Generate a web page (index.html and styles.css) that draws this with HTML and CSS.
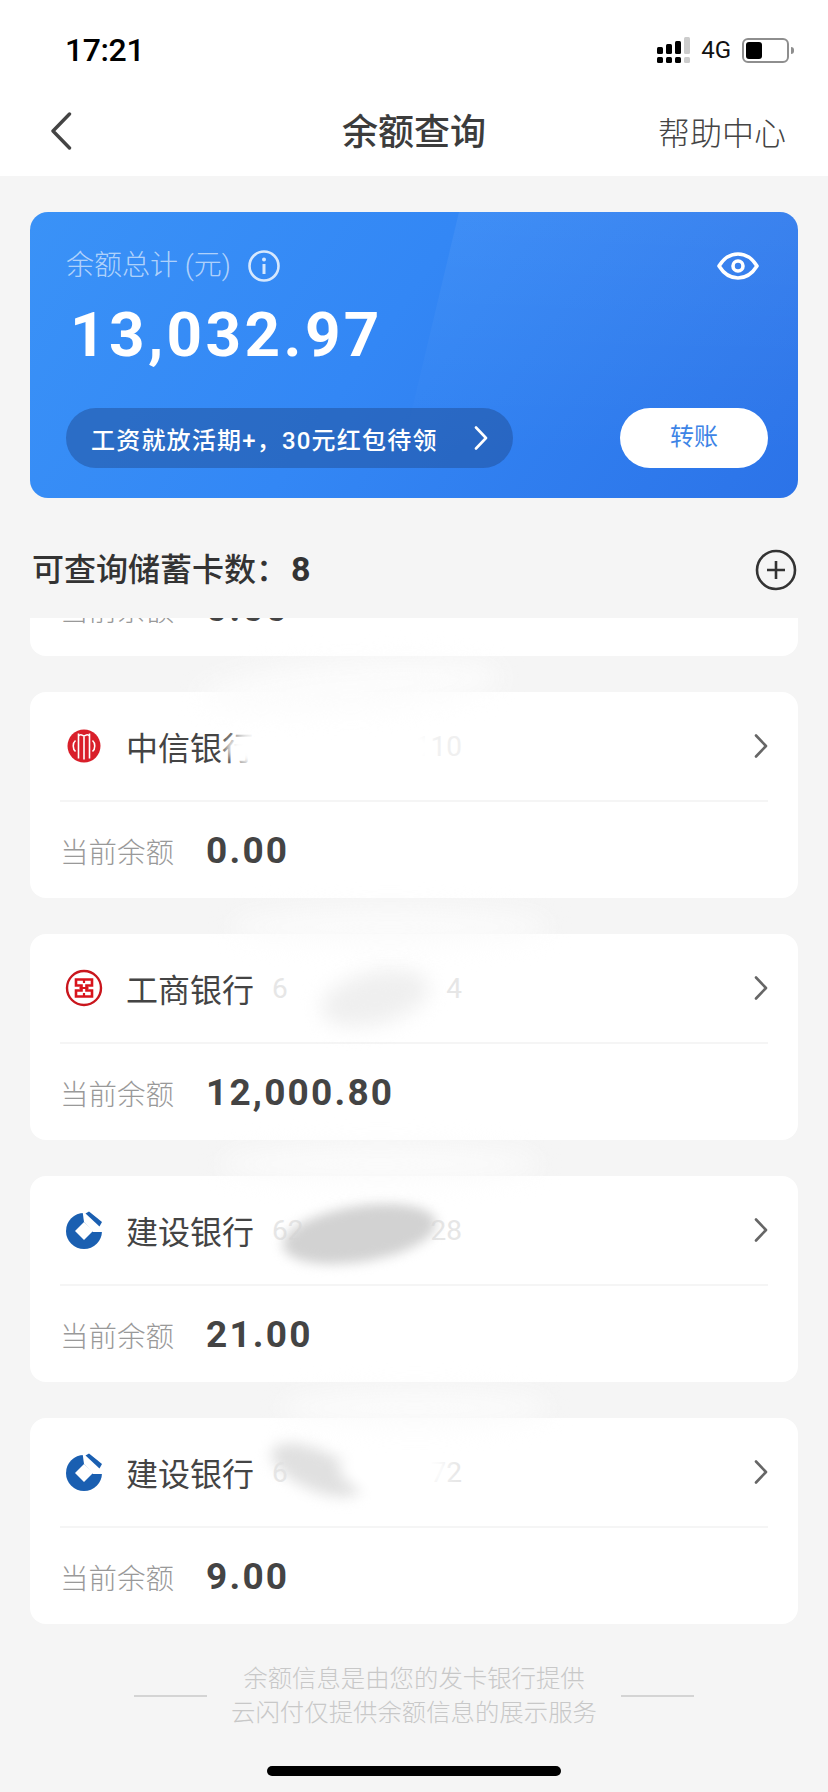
FILE: index.html
```html
<!DOCTYPE html>
<html lang="zh-CN">
<head>
  <meta charset="UTF-8">
  <title>余额查询</title>
  <meta name="viewport" content="width=device-width, initial-scale=1.0">
  <link rel="stylesheet" href="styles.css">
</head>
<body>
  <svg class="defs" width="0" height="0" aria-hidden="true">
    <defs>
      <symbol id="chev" viewBox="0 0 14 24">
        <path d="M2 1.5 12 12 2 22.5" fill="none" stroke="currentColor" stroke-width="2.6" stroke-linecap="round" stroke-linejoin="round"/>
      </symbol>
      <symbol id="logo-citic" viewBox="-1 -1 38 38">
        <circle cx="18" cy="18" r="16.500" fill="#d91f2a"/>
        <path d="M9.500 12.500C6.500 15 6.500 21 9.500 23.500M12.500 5.500V30.500M12.500 8C15 5 16.500 8 18 8S21 5 23.500 8M18 8V31.500M23.500 5.500V30.500M26.500 12.500C29.500 15 29.500 21 26.500 23.500" fill="none" stroke="#fff" stroke-width="1.600"/>
      </symbol>
      <symbol id="logo-icbc" viewBox="0 0 38 38">
        <circle cx="19" cy="19" r="17" fill="none" stroke="#c9161d" stroke-width="2.400"/>
        <path d="M11 10.500H27V16.500H21.500V21.500H27V27.500H11V21.500H16.500V16.500H11Z" fill="none" stroke="#d8141c" stroke-width="2.600"/>
        <path d="M19 10.500V14M19 24V27.500M14.500 19H23.500" stroke="#d8141c" stroke-width="2.200" fill="none"/>
      </symbol>
      <symbol id="logo-ccb" viewBox="-1 0 38 38">
        <circle cx="18" cy="20" r="18" fill="#1a5fb1"/>
        <path d="M18 11 27 20 18 29 9 20Z" fill="#fff"/>
        <path d="M18 11 16.500 0 22 0 38 14V21H27Z" fill="#fff"/>
        <path d="M19.500 2.500 23 .5 36 11 33.500 15.500Z" fill="#1a5fb1"/>
      </symbol>
    </defs>
  </svg>

  <header class="top">
    <div class="status">
      <span class="time">17:21</span>
      <div class="status-right">
        <svg class="signal" width="33" height="26" viewBox="0 0 33 26">
          <g fill="#000">
            <rect x="0" y="10" width="6" height="7" rx="1.500"/>
            <rect x="9" y="7" width="6" height="10" rx="1.500"/>
            <rect x="18" y="4" width="6" height="13" rx="1.500"/>
            <rect x="0" y="20" width="6" height="6" rx="1.500"/>
            <rect x="9" y="20" width="6" height="6" rx="1.500"/>
            <rect x="18" y="20" width="6" height="6" rx="1.500"/>
          </g>
          <g fill="#ccc">
            <rect x="27" y="0" width="6" height="17" rx="1.500"/>
            <rect x="27" y="20" width="6" height="6" rx="1.500"/>
          </g>
        </svg>
        <span class="net">4G</span>
        <div class="battery"><div class="battery-fill"></div></div>
        <div class="battery-cap"></div>
      </div>
    </div>
    <nav class="nav">
      <svg class="back" width="22" height="38" viewBox="0 0 22 38">
        <path d="M19.500 2 3 19 19.500 36" fill="none" stroke="#444" stroke-width="3.400" stroke-linecap="round" stroke-linejoin="round"/>
      </svg>
      <h1 class="nav-title">余额查询</h1>
      <a class="nav-help">帮助中心</a>
    </nav>
  </header>

  <main class="page">
    <section class="total">
      <div class="total-label-row">
        <span class="total-label">余额总计 (元)</span>
        <svg class="info" width="32" height="32" viewBox="0 0 32 32">
          <circle cx="16" cy="16" r="14.500" fill="none" stroke="currentColor" stroke-width="2.600"/>
          <circle cx="16" cy="9.500" r="2" fill="currentColor"/>
          <path d="M16 14V24" stroke="currentColor" stroke-width="3"/>
        </svg>
        <svg class="eye" width="42" height="28" viewBox="0 0 42 28">
          <path d="M2 14C7 6 13.500 2 21 2S35 6 40 14C35 22 28.500 26 21 26S7 22 2 14Z" fill="none" stroke="#fff" stroke-width="3.600" stroke-linejoin="round"/>
          <circle cx="21" cy="14" r="5" fill="none" stroke="#fff" stroke-width="3.600"/>
        </svg>
      </div>
      <div class="total-num">13,032.97</div>
      <div class="total-actions">
        <a class="promo">
          <span>工资就放活期+，30元红包待领</span>
          <svg class="promo-chev" width="14" height="24"><use href="#chev"/></svg>
        </a>
        <a class="transfer">转账</a>
      </div>
    </section>

    <div class="list-head">
      <h2 class="list-title">可查询储蓄卡数：<b>8</b></h2>
      <svg class="add" width="42" height="42" viewBox="0 0 42 42">
        <circle cx="21" cy="21" r="19" fill="none" stroke="#333" stroke-width="2.600"/>
        <path d="M12 21H30M21 12V30" stroke="#333" stroke-width="2.600"/>
      </svg>
    </div>

    <div class="list">
      <article class="card card-scrolled">
        <div class="card-head"></div>
        <div class="card-bal"><span class="bal-label">当前余额</span><span class="bal-num">0.00</span></div>
      </article>

      <article class="card">
        <div class="smudge smudge-a1"></div>
        <div class="card-head">
          <svg class="logo" width="38" height="38"><use href="#logo-citic"/></svg>
          <span class="bank">中信银行</span>
          <span class="card-no card-no-faint"><i></i><i>4110</i></span>
          <svg class="chev" width="14" height="24"><use href="#chev"/></svg>
        </div>
        <div class="smudge smudge-a2"></div>
        <div class="card-bal"><span class="bal-label">当前余额</span><span class="bal-num">0.00</span></div>
      </article>

      <article class="card">
        <div class="smudge smudge-b1"></div>
        <div class="card-head">
          <svg class="logo" width="38" height="38"><use href="#logo-icbc"/></svg>
          <span class="bank">工商银行</span>
          <span class="card-no"><i>6</i><i>4</i></span>
          <svg class="chev" width="14" height="24"><use href="#chev"/></svg>
        </div>
        <div class="smudge smudge-b2"></div>
        <div class="card-bal"><span class="bal-label">当前余额</span><span class="bal-num">12,000.80</span></div>
      </article>

      <article class="card">
        <div class="smudge smudge-c1"></div>
        <div class="card-head">
          <svg class="logo" width="38" height="38"><use href="#logo-ccb"/></svg>
          <span class="bank">建设银行</span>
          <span class="card-no"><i>62</i><i>28</i></span>
          <svg class="chev" width="14" height="24"><use href="#chev"/></svg>
        </div>
        <div class="smudge smudge-c2"></div>
        <div class="card-bal"><span class="bal-label">当前余额</span><span class="bal-num">21.00</span></div>
      </article>

      <article class="card">
        <div class="smudge smudge-d1"></div>
        <div class="smudge smudge-d3"></div>
        <div class="card-head">
          <svg class="logo" width="38" height="38"><use href="#logo-ccb"/></svg>
          <span class="bank">建设银行</span>
          <span class="card-no"><i>6</i><i>72</i></span>
          <svg class="chev" width="14" height="24"><use href="#chev"/></svg>
        </div>
        <div class="smudge smudge-d2"></div>
        <div class="card-bal"><span class="bal-label">当前余额</span><span class="bal-num">9.00</span></div>
      </article>
    </div>

    <footer class="note">
      <span class="note-line"></span>
      <p class="note-text">余额信息是由您的发卡银行提供<br>云闪付仅提供余额信息的展示服务</p>
      <span class="note-line"></span>
    </footer>
  </main>

  <div class="home-bar"></div>
</body>
</html>
```

FILE: styles.css
```css
html, body {
  margin: 0;
  padding: 0;
}
body {
  width: 828px;
  height: 1792px;
  overflow: hidden;
  position: relative;
  background: #f5f5f5;
  color: #444;
  font-family: Roboto, 'Noto Sans CJK SC', sans-serif;
}
.defs {
  position: absolute;
}
h1, h2, p {
  margin: 0;
  font-weight: 400;
}

/* status bar + nav */
.top {
  background: #fff;
  height: 176px;
}
.status {
  height: 88px;
  box-sizing: border-box;
  padding: 34px 34px 0 65px;
  display: flex;
  justify-content: space-between;
  align-items: flex-start;
}
.time {
  font-size: 32px;
  line-height: 32px;
  font-weight: 500;
  color: #000;
  letter-spacing: -0.4px;
}
.status-right {
  display: flex;
  align-items: center;
  margin-top: 3px;
}
.net {
  font-size: 24px;
  line-height: 26px;
  color: #111;
  margin-left: 11px;
  margin-right: 11px;
}
.battery {
  width: 47px;
  height: 25px;
  box-sizing: border-box;
  border: 2px solid #8e8e8e;
  border-radius: 6px;
  padding: 2px;
}
.battery-fill {
  width: 16px;
  height: 100%;
  background: #000;
  border-radius: 3px;
}
.battery-cap {
  width: 3px;
  height: 7px;
  margin-left: 2px;
  background: #8e8e8e;
  border-radius: 0 3px 3px 0;
}
.nav {
  height: 88px;
  box-sizing: border-box;
  padding: 0 42px 0 50px;
  display: flex;
  align-items: center;
  justify-content: space-between;
  position: relative;
}
.back {
  margin-top: -2px;
}
.nav-title {
  font-size: 36px;
  font-weight: 500;
  color: #3c3c3c;
  line-height: 88px;
  margin-left: 98px;
  margin-top: 2px;
}
.nav-help {
  font-size: 32px;
  font-weight: 300;
  color: #444;
  line-height: 88px;
  margin-top: 4px;
}

.page {
  padding: 36px 30px 0;
}

/* blue total card */
.total {
  height: 286px;
  box-sizing: border-box;
  padding: 36px 26px 30px 36px;
  border-radius: 18px;
  background: linear-gradient(125deg, #3a92f7 0%, #3387f5 45%, #2c73e8 100%);
  position: relative;
  overflow: hidden;
  color: #fff;
  display: flex;
  flex-direction: column;
}
.total::before {
  content: '';
  position: absolute;
  inset: 0;
  background: linear-gradient(180deg, rgba(255,255,255,.06), rgba(255,255,255,0) 85%);
  clip-path: polygon(429px 0, 100% 0, 100% 100%, 361px 100%);
}
.total > * {
  position: relative;
}
.total-label-row {
  display: flex;
  align-items: center;
  height: 36px;
}
.total-label {
  font-size: 28px;
  font-weight: 300;
  color: rgba(255,255,255,.62);
  line-height: 36px;
}
.info {
  margin-left: 17px;
  color: rgba(255,255,255,.8);
}
.eye {
  margin-left: auto;
  margin-right: 13px;
}
.total-num {
  font-size: 62px;
  font-weight: 700;
  line-height: 72px;
  letter-spacing: 3.4px;
  margin: 15px 0 0 4px;
}
.total-actions {
  display: flex;
  gap: 107px;
  margin-top: auto;
}
.promo {
  width: 447px;
  height: 60px;
  box-sizing: border-box;
  padding: 0 25px;
  border-radius: 30px;
  background: rgba(32, 78, 150, .5);
  font-size: 24px;
  font-weight: 500;
  letter-spacing: 1.2px;
  display: flex;
  align-items: center;
  justify-content: space-between;
}
.promo-chev {
  color: #fff;
}
.transfer {
  width: 148px;
  height: 60px;
  border-radius: 30px;
  background: #fff;
  color: #3d84e6;
  font-size: 24px;
  line-height: 58px;
  text-align: center;
}

/* list */
.list-head {
  height: 120px;
  box-sizing: border-box;
  padding: 50px 1px 0 2px;
  display: flex;
  justify-content: space-between;
  align-items: flex-start;
}
.list-title {
  font-size: 32px;
  font-weight: 500;
  line-height: 44px;
  color: #333;
  margin-top: -1px;
}
.list-title b {
  font-size: 34px;
  font-weight: 700;
  margin-left: 3px;
}
.add {
  margin-top: 1px;
}
.list {
  height: 1006px;
  overflow: hidden;
  display: flex;
  flex-direction: column;
  gap: 36px;
}
.card {
  flex: none;
  height: 206px;
  box-sizing: border-box;
  padding: 0 30px;
  background: #fff;
  border-radius: 16px;
  position: relative;
}
.card-scrolled {
  margin-top: -168px;
}
.card-head {
  height: 110px;
  box-sizing: border-box;
  border-bottom: 2px solid #f5f5f5;
  display: flex;
  align-items: center;
  position: relative;
}
.logo {
  flex: none;
  margin-left: 5px;
}
.bank {
  font-size: 32px;
  margin-left: 23px;
  color: #444;
  position: relative;
}
.card-no {
  margin-left: 18px;
  width: 190px;
  display: flex;
  justify-content: space-between;
  font-size: 28px;
  color: #e6e6e6;
  position: relative;
}
.card-no-faint {
  color: #f0f0f0;
}
.card-no i {
  font-style: normal;
}
.chev {
  margin-left: auto;
  color: #666;
}
.card-bal {
  height: 96px;
  display: flex;
  align-items: center;
  position: relative;
}
.bal-label {
  font-size: 28.5px;
  color: #999;
  font-weight: 300;
}
.bal-num {
  font-size: 37px;
  font-weight: 700;
  letter-spacing: 2.2px;
  margin-left: 32px;
  color: #444;
}

/* the hand painted masks over the card numbers */
.smudge {
  position: absolute;
  border-radius: 50%;
  z-index: 2;
}
.smudge-a1 {
  left: 195px;
  top: 26px;
  width: 210px;
  height: 60px;
  background: #fff;
  filter: blur(5px);
}
.smudge-a2 {
  left: 170px;
  top: -30px;
  width: 300px;
  height: 50px;
  background: #fcfcfc;
  filter: blur(12px);
  transform: rotate(-4deg);
}
.smudge-b1 {
  left: 290px;
  top: 38px;
  width: 110px;
  height: 52px;
  background: #efefef;
  filter: blur(10px);
  transform: rotate(-14deg);
}
.smudge-b2 {
  left: 200px;
  top: -25px;
  width: 320px;
  height: 36px;
  background: #fbfbfb;
  filter: blur(12px);
}
.smudge-c1 {
  left: 252px;
  top: 30px;
  width: 155px;
  height: 56px;
  background: #d2d2d2;
  filter: blur(6px);
  transform: rotate(-9deg);
}
.smudge-c2 {
  left: 190px;
  top: -30px;
  width: 320px;
  height: 36px;
  background: #fbfbfb;
  filter: blur(12px);
}
.smudge-d1 {
  left: 238px;
  top: 32px;
  width: 96px;
  height: 40px;
  background: #e0e0e0;
  filter: blur(7px);
  transform: rotate(24deg);
}
.smudge-d2 {
  left: 250px;
  top: -28px;
  width: 270px;
  height: 36px;
  background: #fbfbfb;
  filter: blur(12px);
}
.smudge-d3 {
  left: 310px;
  top: 26px;
  width: 110px;
  height: 50px;
  background: #fff;
  filter: blur(8px);
}

/* footer note */
.note {
  margin-top: 38px;
  display: flex;
  align-items: center;
  justify-content: center;
  gap: 23px;
}
.note-line {
  width: 73px;
  height: 2px;
  background: #d4d4d4;
}
.note-text {
  font-size: 24.4px;
  line-height: 34px;
  font-weight: 300;
  color: #c8c8c8;
  text-align: center;
  width: 368px;
}

.home-bar {
  position: absolute;
  left: 267px;
  top: 1766px;
  width: 294px;
  height: 10px;
  border-radius: 5px;
  background: #000;
}
```
